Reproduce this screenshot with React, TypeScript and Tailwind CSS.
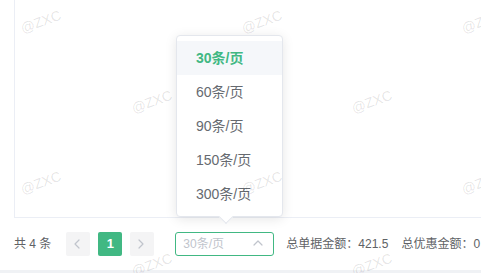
import React from "react";

const sizes = ["30条/页", "60条/页", "90条/页", "150条/页", "300条/页"];

const marks: { x: number; y: number }[] = [
  { x: 41, y: 22 },
  { x: 262, y: 22 },
  { x: 482, y: 22 },
  { x: 152, y: 102 },
  { x: 372, y: 102 },
  { x: 41, y: 183 },
  { x: 262, y: 183 },
  { x: 482, y: 183 },
  { x: 152, y: 265 },
  { x: 372, y: 265 },
];

const Chevron: React.FC<{ dir: "left" | "right" | "up" }> = ({ dir }) => {
  const d =
    dir === "left" ? "M6 1 L2 5 L6 9" : dir === "right" ? "M2 1 L6 5 L2 9" : "M1 6 L5 2 L9 6";
  return (
    <svg width="10" height="10" viewBox="0 0 10 10" fill="none">
      <path d={d} stroke="#c0c4cc" strokeWidth="1.2" strokeLinecap="round" strokeLinejoin="round" />
    </svg>
  );
};

export default function App() {
  return (
    <div
      className="relative w-[481px] h-[273px] overflow-hidden bg-white text-[#606266]"
      style={{ fontFamily: '"Liberation Sans", "Noto Sans CJK SC", sans-serif' }}
    >
      {/* table body */}
      <div className="ml-[14px] h-[218px] border-l border-b border-[#ebeef5]" />

      {/* pagination */}
      <div className="flex items-center h-[52px] pl-[14px] text-[12px] whitespace-nowrap">
        <span className="shrink-0 mr-[15px]">共 4 条</span>
        <button className="shrink-0 w-[24px] h-[24px] rounded-[2px] bg-[#f4f4f5] flex items-center justify-center">
          <Chevron dir="left" />
        </button>
        <button className="shrink-0 ml-[8px] w-[24px] h-[24px] rounded-[2px] bg-[#41b883] text-[13px] text-white font-bold flex items-center justify-center">
          1
        </button>
        <button className="shrink-0 ml-[8px] w-[24px] h-[24px] rounded-[2px] bg-[#f4f4f5] flex items-center justify-center">
          <Chevron dir="right" />
        </button>
        <div className="shrink-0 ml-[21px] w-[99px] h-[24px] rounded-[3px] border border-[#41b883] flex items-center justify-between pl-[7px] pr-[10px] text-[#c0c4cc]">
          <span>30条/页</span>
          <Chevron dir="up" />
        </div>
        <span className="shrink-0 ml-[12px]">总单据金额：421.5</span>
        <span className="shrink-0 ml-[13px]">总优惠金额：0</span>
      </div>
      <div className="h-[3px] bg-[#f0f2f5]" />

      {/* page size menu */}
      <div className="absolute left-[176px] top-[35px] w-[107px] h-[182px] bg-white border border-[#e4e7ed] rounded-[4px] shadow-[0_2px_12px_rgba(0,0,0,0.1)] py-[5px]">
        {sizes.map((s, i) => (
          <div
            key={s}
            className={
              i === 0
                ? "h-[34px] flex items-center pl-[19px] text-[14px] bg-[#f5f7fa] text-[#41b883] font-bold"
                : "h-[34px] flex items-center pl-[19px] text-[14px] text-[#666a70]"
            }
          >
            {s}
          </div>
        ))}
        <div className="absolute left-[44px] -bottom-[6px] w-[10px] h-[10px] bg-white border-r border-b border-[#e4e7ed] rotate-45" />
      </div>

      {/* watermark */}
      {marks.map((m, i) => (
        <div
          key={i}
          className="absolute pointer-events-none text-[14px] text-[rgba(0,0,0,0.11)] -rotate-[20deg] -translate-x-1/2 -translate-y-1/2"
          style={{ left: m.x, top: m.y }}
        >
          @ZXC
        </div>
      ))}
    </div>
  );
}
